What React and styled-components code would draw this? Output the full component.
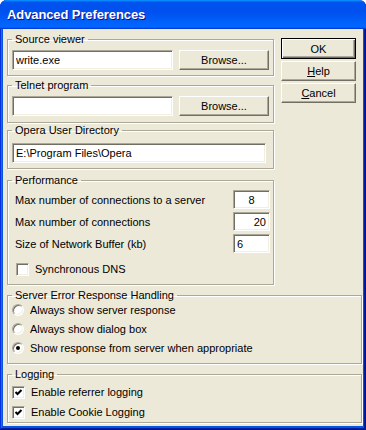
import React from 'react';
import styled, { createGlobalStyle } from 'styled-components';

const GlobalStyle = createGlobalStyle`
  body {
    margin: 0;
    background: #fff;
  }
  * {
    box-sizing: border-box;
  }
`;

const App = () => {
  return (
    <>
      <GlobalStyle />
      <Window>
        <TitleBar>Advanced Preferences</TitleBar>
        <Client>
          <TopRow>
            <LeftCol>
              <Group $mt={0} $pt={4} $pb={5}>
                <Legend>Source viewer</Legend>
                <FieldRow>
                  <Field $w={161} defaultValue="write.exe" />
                  <Button $w={90}>Browse...</Button>
                </FieldRow>
              </Group>
              <Group $mt={3} $pt={4} $pb={6}>
                <Legend>Telnet program</Legend>
                <FieldRow>
                  <Field $w={161} defaultValue="" />
                  <Button $w={90}>Browse...</Button>
                </FieldRow>
              </Group>
              <Group $mt={1} $pt={6} $pb={5}>
                <Legend>Opera User Directory</Legend>
                <Field $w={254} defaultValue="E:\Program Files\Opera" />
              </Group>
              <Group $mt={5} $pt={3} $pb={4}>
                <Legend>Performance</Legend>
                <PerfList>
                  <PerfRow>
                    <span>Max number of connections to a server</span>
                    <Field $w={37} $h={19} $align="center" defaultValue="8" />
                  </PerfRow>
                  <PerfRow>
                    <span>Max number of connections</span>
                    <Field $w={37} $h={19} $align="right" defaultValue="20" />
                  </PerfRow>
                  <PerfRow>
                    <span>Size of Network Buffer (kb)</span>
                    <Field $w={37} $h={19} defaultValue="6" />
                  </PerfRow>
                </PerfList>
                <OptionRow $h={22} $indent={4} $mt={5}>
                  <CheckBox />
                  Synchronous DNS
                </OptionRow>
              </Group>
            </LeftCol>
            <ButtonCol>
              <Button $h={21} $default>OK</Button>
              <Button><u>H</u>elp</Button>
              <Button><u>C</u>ancel</Button>
            </ButtonCol>
          </TopRow>
          <Group $mt={4} $pt={0} $pb={6}>
            <Legend>Server Error Response Handling</Legend>
            <OptionRow $h={19} $mt={-2}>
              <Radio />
              Always show server response
            </OptionRow>
            <OptionRow $h={19}>
              <Radio />
              Always show dialog box
            </OptionRow>
            <OptionRow $h={19}>
              <Radio $checked />
              Show response from server when appropriate
            </OptionRow>
          </Group>
          <Group $mt={4} $pt={2} $pb={1}>
            <Legend>Logging</Legend>
            <OptionRow $h={18}>
              <CheckBox $checked />
              Enable referrer logging
            </OptionRow>
            <OptionRow $h={18} $mt={2}>
              <CheckBox $checked />
              Enable Cookie Logging
            </OptionRow>
          </Group>
        </Client>
      </Window>
    </>
  );
};

const CheckBox = ({ $checked }) => (
  <CheckFrame>
    {$checked && (
      <svg width="9" height="9" viewBox="0 0 9 9">
        <polyline points="1.5,4 3.5,6 7.5,2" fill="none" stroke="#000" strokeWidth="2" />
      </svg>
    )}
  </CheckFrame>
);

export default App;

const Window = styled.div`
  width: 366px;
  height: 430px;
  display: flex;
  flex-direction: column;
  background: #0855dd;
  border-radius: 7px 7px 0 0;
  overflow: hidden;
  box-shadow: inset -1px -1px #00138c, inset 1px 0 #0831d9, inset -2px -2px #001ea0, inset 2px 0 #166aee;
  font-family: "Liberation Sans", Arial, sans-serif;
  font-size: 11px;
  color: #000;
`;

const TitleBar = styled.div`
  flex: none;
  height: 29px;
  display: flex;
  align-items: center;
  padding: 0 7px 1px;
  background: linear-gradient(180deg, #0997ff, #0053ee 8%, #0050ee 40%, #0066ff 88%, #0066ff 93%, #005bff 95%, #003dd7 96%, #003dd7);
  color: #fff;
  font: bold 13px "Liberation Sans", Arial, sans-serif;
  letter-spacing: -0.1px;
  text-shadow: 1px 1px #0f1089;
`;

const Client = styled.div`
  flex: 1;
  margin: 0 3px 4px;
  padding: 4px 1px 0 4px;
  background: #ece9d8;
  display: flex;
  flex-direction: column;
`;

const TopRow = styled.div`
  display: flex;
  align-items: flex-start;
`;

const LeftCol = styled.div`
  width: 267px;
  display: flex;
  flex-direction: column;
`;

const ButtonCol = styled.div`
  width: 75px;
  margin: 5px 0 0 7px;
  display: flex;
  flex-direction: column;
  gap: 2px;
`;

const Group = styled.fieldset`
  margin: ${p => p.$mt}px 0 0;
  min-width: 0;
  padding: ${p => p.$pt}px 3px ${p => p.$pb}px 4px;
  border: 1px solid #aca899;
  box-shadow: 1px 1px #fff, inset 1px 1px #fff;
`;

const Legend = styled.legend`
  padding: 0 3px;
  line-height: 13px;
  font-size: 11px;
`;

const FieldRow = styled.div`
  display: flex;
  gap: 6px;
`;

const Field = styled.input`
  width: ${p => p.$w}px;
  height: ${p => p.$h || 20}px;
  padding: 0 3px;
  border: 1px solid;
  border-color: #aca899 #fff #fff #aca899;
  box-shadow: inset 1px 1px #716f64, inset -1px -1px #f1efe2;
  background: #fff;
  font: 11px "Liberation Sans", Arial, sans-serif;
  color: #000;
  text-align: ${p => p.$align || 'left'};
  outline: none;
`;

const Button = styled.button`
  width: ${p => (p.$w ? `${p.$w}px` : '100%')};
  height: ${p => p.$h || 20}px;
  flex: none;
  padding: 0;
  background: #ece9d8;
  border: 1px solid;
  border-color: #fff #716f64 #716f64 #fff;
  box-shadow: inset -1px -1px #aca899;
  font: 11px "Liberation Sans", Arial, sans-serif;
  color: #000;
  u {
    text-decoration: underline;
  }
  ${p => p.$default && `
    border-color: #000;
    box-shadow: inset 1px 1px #fff, inset -1px -1px #716f64, inset -2px -2px #aca899;
  `}
`;

const PerfList = styled.div`
  display: flex;
  flex-direction: column;
  gap: 3px;
`;

const PerfRow = styled.div`
  height: 19px;
  display: flex;
  align-items: center;
  justify-content: space-between;
  padding-left: 3px;
`;

const OptionRow = styled.div`
  height: ${p => p.$h}px;
  margin-top: ${p => p.$mt || 0}px;
  padding-left: ${p => p.$indent || 0}px;
  display: flex;
  align-items: center;
  gap: 6px;
`;

const CheckFrame = styled.span`
  width: 13px;
  height: 13px;
  flex: none;
  display: flex;
  align-items: center;
  justify-content: center;
  background: #fff;
  border: 1px solid;
  border-color: #aca899 #fff #fff #aca899;
  box-shadow: inset 1px 1px #716f64, inset -1px -1px #f1efe2;
`;

const Radio = styled.span`
  position: relative;
  width: 12px;
  height: 12px;
  flex: none;
  border-radius: 50%;
  background: #fff;
  border: 1px solid;
  border-color: #aca899 #fff #fff #aca899;
  box-shadow: inset 1px 1px #716f64, inset -1px -1px #f1efe2;
  &::after {
    content: '';
    display: ${p => (p.$checked ? 'block' : 'none')};
    position: absolute;
    left: 3px;
    top: 3px;
    width: 4px;
    height: 4px;
    border-radius: 50%;
    background: #000;
  }
`;
